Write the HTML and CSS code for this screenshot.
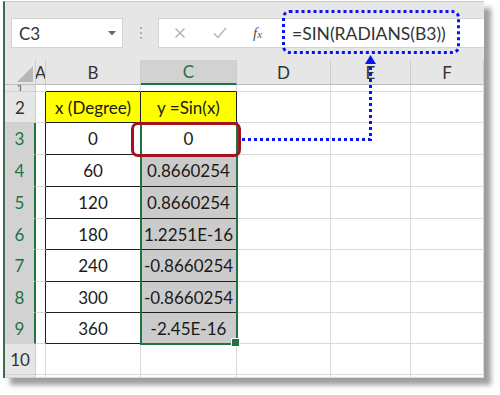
FILE: index.html
```html
<!DOCTYPE html>
<html>
<head>
<meta charset="utf-8">
<link rel="stylesheet" href="styles.css">
</head>
<body>
<div class="win">
  <div class="fbar">
    <div class="namebox">
      <span class="ref">C3</span>
      <svg class="dd" width="8" height="5" viewBox="0 0 8 5"><path d="M0 0H8L4 4.5Z" fill="#6a6a6a"/></svg>
    </div>
    <div class="sep">
      <svg width="4" height="14" viewBox="0 0 4 14"><circle cx="2" cy="2" r="1" fill="#a0a0a0"/><circle cx="2" cy="7" r="1" fill="#a0a0a0"/><circle cx="2" cy="12" r="1" fill="#a0a0a0"/></svg>
    </div>
    <div class="fbox">
      <svg class="ico x" width="12" height="12" viewBox="0 0 12 12"><path d="M1.5 1.5L10.5 10.5M10.5 1.5L1.5 10.5" stroke="#b5b5b5" stroke-width="1.5" fill="none"/></svg>
      <svg class="ico ok" width="14" height="12" viewBox="0 0 14 12"><path d="M1 6.5L5 10.5L13 1" stroke="#b5b5b5" stroke-width="1.5" fill="none"/></svg>
      <span class="fx">f<span class="fxx">x</span></span>
      <span class="ftext">=SIN(RADIANS(B3))</span>
    </div>
  </div>
  <div class="sheet">
    <div class="corner"><svg width="16" height="16" viewBox="0 0 16 16"><path d="M16 0V16H0Z" fill="#b7b7b7"/></svg></div>
    <div class="ch">A</div>
    <div class="ch">B</div>
    <div class="ch on">C</div>
    <div class="ch">D</div>
    <div class="ch">E</div>
    <div class="ch">F</div>

    <div class="rh r1"><span>1</span></div>
    <div class="c"></div><div class="c tb"></div><div class="c tb"></div><div class="c"></div><div class="c"></div><div class="c"></div>

    <div class="rh">2</div>
    <div class="c tl"></div><div class="c t y">x (Degree)</div><div class="c t y">y =Sin(x)</div><div class="c"></div><div class="c"></div><div class="c"></div>

    <div class="rh on">3</div>
    <div class="c tl"></div><div class="c t">0</div><div class="c t">0</div><div class="c"></div><div class="c"></div><div class="c"></div>

    <div class="rh on">4</div>
    <div class="c tl"></div><div class="c t">60</div><div class="c t g">0.8660254</div><div class="c"></div><div class="c"></div><div class="c"></div>

    <div class="rh on">5</div>
    <div class="c tl"></div><div class="c t">120</div><div class="c t g">0.8660254</div><div class="c"></div><div class="c"></div><div class="c"></div>

    <div class="rh on">6</div>
    <div class="c tl"></div><div class="c t">180</div><div class="c t g">1.2251E-16</div><div class="c"></div><div class="c"></div><div class="c"></div>

    <div class="rh on">7</div>
    <div class="c tl"></div><div class="c t">240</div><div class="c t g">-0.8660254</div><div class="c"></div><div class="c"></div><div class="c"></div>

    <div class="rh on">8</div>
    <div class="c tl"></div><div class="c t">300</div><div class="c t g">-0.8660254</div><div class="c"></div><div class="c"></div><div class="c"></div>

    <div class="rh on">9</div>
    <div class="c tl"></div><div class="c t">360</div><div class="c t g">-2.45E-16</div><div class="c"></div><div class="c"></div><div class="c"></div>

    <div class="rh">10</div>
    <div class="c"></div><div class="c"></div><div class="c"></div><div class="c"></div><div class="c"></div><div class="c"></div>

    <div class="rh r11"></div>
    <div class="c"></div><div class="c"></div><div class="c"></div><div class="c"></div><div class="c"></div><div class="c"></div>

    <div class="sel"></div>
    <div class="hl"></div>
  </div>
</div>
<svg class="notes" width="500" height="395" viewBox="0 0 500 395">
  <rect x="283.5" y="11.5" width="175" height="41" rx="6" fill="none" stroke="#0a14f0" stroke-width="3" stroke-dasharray="3 3"/>
  <path d="M242 139.5H370.5V64" fill="none" stroke="#0a14f0" stroke-width="3" stroke-dasharray="3 3"/>
  <path d="M370.5 55L365 64H376Z" fill="#0a14f0"/>
</svg>
</body>
</html>
```

FILE: styles.css
```css
* { box-sizing: border-box; }
html, body { margin: 0; padding: 0; }
body {
  width: 500px;
  height: 395px;
  background: #ffffff;
  position: relative;
  overflow: hidden;
  font-family: Lato, "Open Sans", sans-serif;
  color: #222;
}
.win {
  margin: 1px 0 0 3px;
  width: 481px;
  border-left: 2px solid #3f6b4e;
  border-top: 1px solid #c8c8c8;
  box-shadow: 7px 7px 5px rgba(0, 0, 0, 0.38);
  background: #fff;
}
.fbar {
  height: 58px;
  background: #e6e6e6;
  display: flex;
  align-items: flex-start;
  padding: 16px 0 0 6px;
}
.namebox {
  width: 112px;
  height: 30px;
  background: #fff;
  border: 1px solid #d4d4d4;
  display: flex;
  align-items: center;
  justify-content: space-between;
  padding: 0 6px 0 7px;
}
.ref { font-size: 17px; color: #333; }
.sep {
  width: 35px;
  height: 30px;
  display: flex;
  align-items: center;
  justify-content: center;
}
.fbox {
  flex: 1;
  height: 30px;
  background: #fff;
  border: 1px solid #d4d4d4;
  border-right: none;
  display: flex;
  align-items: center;
  padding-left: 15px;
}
.ico.x { margin-right: 27px; }
.ico.ok { margin-right: 26px; }
.fx {
  font-family: "Liberation Serif", serif;
  font-style: italic;
  font-size: 15px;
  color: #555;
  width: 39px;
}
.fxx { font-size: 11px; }
.ftext { font-size: 17.5px; color: #333; }

.sheet {
  display: grid;
  grid-template-columns: 31px 10px 95px 96px 94px 80px 73px;
  grid-template-rows: 25px 7px 31px 32px 32px 32px 31px 32px 31px 31px 31px 3px;
  position: relative;
  overflow: hidden;
  background: #fff;
}
.corner {
  background: #e6e6e6;
  border-right: 1px solid #cdcdcd;
  border-bottom: 1px solid #bdbdbd;
  display: flex;
  align-items: flex-end;
  justify-content: flex-end;
  padding: 0 2px 2px 0;
}
.ch {
  background: #e6e6e6;
  border-right: 1px solid #cdcdcd;
  border-bottom: 1px solid #bdbdbd;
  font-size: 17px;
  color: #333;
  display: flex;
  align-items: center;
  justify-content: center;
  overflow: hidden;
}
.ch.on {
  background: #d2d2d2;
  color: #217346;
  border-bottom: 2px solid #217346;
}
.rh {
  background: #e6e6e6;
  border-right: 1px solid #cdcdcd;
  border-bottom: 1px solid #d0d0d0;
  font-size: 17px;
  color: #333;
  display: flex;
  align-items: center;
  justify-content: center;
  overflow: hidden;
}
.rh.on {
  background: #d2d2d2;
  color: #217346;
  border-right: 2px solid #217346;
}
.rh.r1 { align-items: flex-start; font-size: 12px; line-height: 6px; color: #666; }
.c {
  border-right: 1px solid #dadada;
  border-bottom: 1px solid #dadada;
  font-size: 17px;
  display: flex;
  align-items: center;
  justify-content: center;
  white-space: nowrap;
  overflow: hidden;
}
.c.tb { border-bottom-color: #1e1e1e; }
.c.tl { border-right-color: #1e1e1e; }
.c.t { border-right-color: #1e1e1e; border-bottom-color: #1e1e1e; color: #1a1a1a; }
.c.y { background: #ffff00; }
.c.g { background: #cbcbcb; }

.sel {
  position: absolute;
  grid-column: 4 / 5;
  grid-row: 4 / 11;
  top: -1px;
  left: -1px;
  right: -1px;
  bottom: -1px;
  border: 2px solid #217346;
  z-index: 2;
}
.sel::after {
  content: "";
  position: absolute;
  right: -4px;
  bottom: -4px;
  width: 7px;
  height: 7px;
  background: #217346;
  border: 1px solid #fff;
}
.hl {
  position: absolute;
  grid-column: 4 / 5;
  grid-row: 4 / 5;
  top: -1px;
  left: -10px;
  right: -4px;
  bottom: -2px;
  border: 3px solid #a3121f;
  border-radius: 7px;
  z-index: 3;
}
.notes {
  position: absolute;
  left: 0;
  top: 0;
  z-index: 10;
  pointer-events: none;
}
```
